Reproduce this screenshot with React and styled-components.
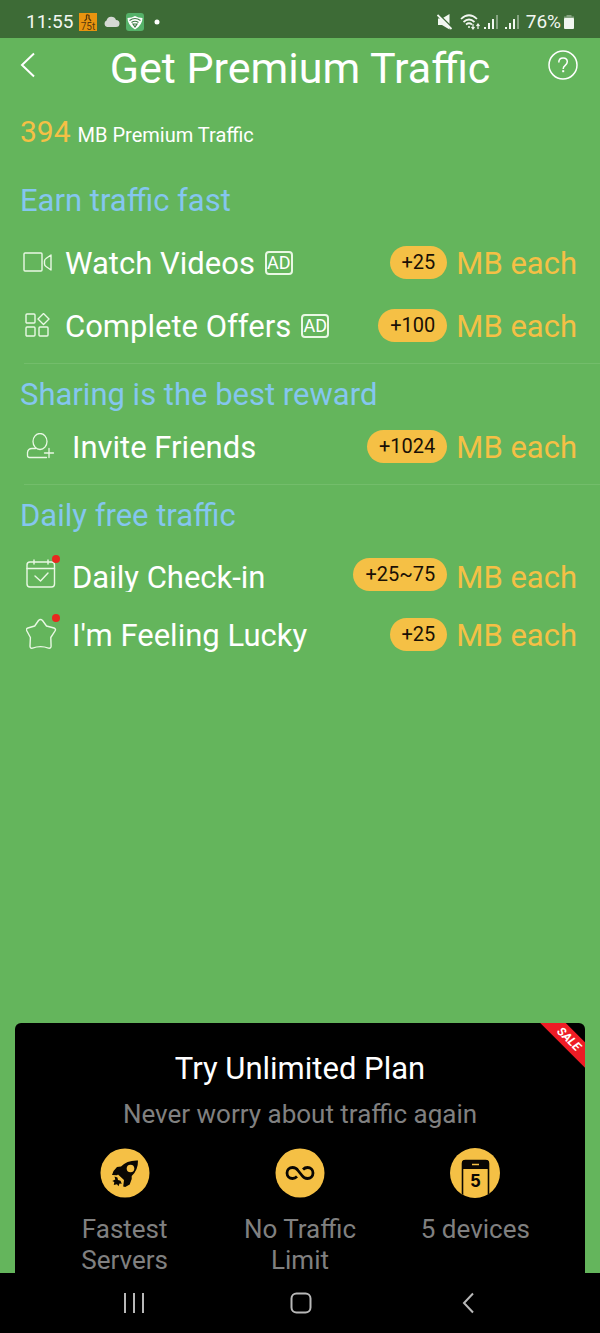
import React from "react";
import styled, { createGlobalStyle } from "styled-components";

const green = "#64b55c";
const amber = "#f5c045";

const GlobalStyle = createGlobalStyle`
  *, *::before, *::after { box-sizing: border-box; }
  body { margin: 0; background: ${green}; font-family: Roboto, "Liberation Sans", sans-serif; }
  button { font: inherit; color: inherit; background: none; border: 0; padding: 0; cursor: pointer; }
  h1, h2, p, ul { margin: 0; padding: 0; font-weight: 400; }
  ul { list-style: none; }
  svg { display: block; flex: none; }
`;

const Page = styled.div`
  display: flex;
  flex-direction: column;
  min-height: 100vh;
  background: ${green};
  color: #fff;
`;

const StatusBar = styled.div`
  display: flex;
  justify-content: space-between;
  height: 38px;
  padding: 6px 26px 0;
  background: #3d6b36;
  color: #f2f7f1;
  font-size: 19px;
  line-height: 32px;
`;

const StatusGroup = styled.div`
  display: flex;
  align-items: center;
  gap: ${(p) => p.$gap}px;
`;

const Header = styled.header`
  display: grid;
  grid-template-columns: 60px 1fr 60px;
  align-items: center;
  height: 56px;
`;

const IconButton = styled.button`
  display: flex;
  justify-content: ${(p) => p.$align};
  padding: 0 21px 2px 20px;
`;

const Title = styled.h1`
  padding-top: 4px;
  font-size: 43px;
  line-height: 52px;
  text-align: center;
  white-space: nowrap;
`;

const Balance = styled.p`
  margin: 20px 20px 0;
  font-size: 20px;
  line-height: 36px;
`;

const Amount = styled.span`
  margin-right: 7px;
  color: ${amber};
  font-size: 30px;
`;

const Section = styled.section`
  padding-top: ${(p) => p.$top}px;
`;

const SectionTitle = styled.h2`
  margin-bottom: ${(p) => p.$gap}px;
  padding: 0 20px;
  color: #85c6ef;
  font-size: 31px;
  line-height: 36px;
`;

const Divider = styled.hr`
  width: calc(100% - 24px);
  height: 1px;
  margin: 6px 0 0 24px;
  border: 0;
  background: #73bd6b;
`;

const Row = styled.button`
  display: flex;
  align-items: center;
  width: 100%;
  height: ${(p) => p.$height}px;
  padding: 0 23px;
  text-align: left;
`;

const RowIcon = styled.span`
  position: relative;
  flex: none;
  width: ${(p) => (p.$wide ? 49 : 42)}px;
  padding-left: ${(p) => (p.$wide ? 3 : 0)}px;
`;

const Dot = styled.span`
  position: absolute;
  top: -4px;
  left: 29px;
  width: 8px;
  height: 8px;
  border-radius: 50%;
  background: #e8281e;
`;

const RowLabel = styled.span`
  padding-top: ${(p) => (p.$clipped ? 8 : 3)}px;
  overflow: ${(p) => (p.$clipped ? "hidden" : "visible")};
  font-size: 31px;
  line-height: ${(p) => (p.$clipped ? 28 : 36)}px;
  white-space: nowrap;
`;

const AdBadge = styled.span`
  display: flex;
  flex: none;
  justify-content: center;
  width: 28px;
  margin-left: 10px;
  border: 2px solid #e9f8e4;
  border-radius: 4px;
  font-size: 18px;
  line-height: 20px;
`;

const Pill = styled.span`
  margin: 0 9px 0 auto;
  padding: 0 12px;
  border-radius: 17px;
  background: ${amber};
  color: #1a1005;
  font-size: 20px;
  line-height: 33px;
`;

const Unit = styled.span`
  padding-top: ${(p) => (p.$low ? 8 : 3)}px;
  color: ${amber};
  font-size: 31px;
  line-height: ${(p) => (p.$low ? 28 : 36)}px;
  white-space: nowrap;
`;

const PlanCard = styled.section`
  position: relative;
  margin: auto 15px -3px;
  padding: 28px 22px 0;
  border-radius: 6px 6px 0 0;
  background: #000;
  text-align: center;
  overflow: hidden;
`;

const PlanTitle = styled.h2`
  font-size: 31px;
  line-height: 36px;
`;

const PlanText = styled.p`
  margin: 12px 0 19px;
  color: #808080;
  font-size: 26px;
  line-height: 30px;
`;

const Features = styled.ul`
  display: grid;
  grid-template-columns: repeat(3, 1fr);
`;

const Feature = styled.li`
  display: flex;
  flex-direction: column;
  align-items: center;
  gap: 16px;
  color: #808080;
  font-size: 26px;
  line-height: 31px;
`;

const FeatureName = styled.span`
  max-width: 130px;
`;

const Ribbon = styled.span`
  position: absolute;
  top: 7px;
  right: -24px;
  width: 80px;
  background: #ee1c25;
  font-size: 12px;
  font-weight: 700;
  font-style: italic;
  line-height: 18px;
  transform: rotate(45deg);
`;

const NavBar = styled.nav`
  position: relative;
  display: grid;
  grid-template-columns: repeat(3, 1fr);
  height: 60px;
  padding: 0 48px 0 50px;
  background: #000;
`;

const NavButton = styled.button`
  display: flex;
  align-items: center;
  justify-content: center;
`;

const line = { fill: "none", stroke: "#e9f8e4", strokeWidth: 1.4, strokeLinejoin: "round", strokeLinecap: "round" };

const VideoIcon = () => (
  <svg width="30" height="22" viewBox="0 0 30 22" {...line}>
    <rect x="1" y="1" width="18" height="18" rx="1" />
    <path d="M28 3v15l-5-3.500q-1.500-1-1.500-2.500v-3q0-1.500 1.500-2.500z" />
  </svg>
);

const OffersIcon = () => (
  <svg width="30" height="26" viewBox="0 0 30 26" {...line}>
    <rect x="3" y="1" width="9" height="9" rx="1" />
    <rect x="3" y="14" width="9" height="9" rx="1" />
    <rect x="16" y="14" width="9" height="9" rx="1" />
    <path d="M20.500 0.500l5.500 5.500-5.500 5.500-5.500-5.500z" />
  </svg>
);

const InviteIcon = () => (
  <svg width="30" height="28" viewBox="0 0 30 28" {...line} strokeWidth="1.3">
    <ellipse cx="14" cy="8.500" rx="7" ry="8" />
    <path d="M9.500 15.500H6q-4 0-4.500 4v3q0 2 2 2h17M23 15.500v9M18.500 20h9" />
  </svg>
);

const CalendarIcon = () => (
  <svg width="30" height="30" viewBox="0 0 30 30" {...line}>
    <rect x="1" y="3" width="27.500" height="25" rx="3" />
    <path d="M1 9.500h27.500M8 1v4M22 1v4M9 17l5.500 5 7.500-8" />
  </svg>
);

const StarIcon = () => (
  <svg width="32" height="32" viewBox="0 0 32 32" {...line}>
    <path d="M12.500 2.500q2-2 4 0l4 5.500 7.500 2q2.300.9 1 3l-4.200 6.500.3 8.800q-.2 2.400-2.600 1.800-8-3-16 0-2.400.6-2.500-1.800l.4-8.800L0.900 13q-1.300-2.100 1-3l6.800-2z" />
  </svg>
);

const RocketIcon = () => (
  <svg width="50" height="50" viewBox="0 0 50 50">
    <circle cx="25" cy="25" r="24.500" fill={amber} />
    <path d="M38 12.500q-11-.5-17 6l-4 .5q-4 3.500-5 8l5 .2 1-.7 6 5.500-.8 6.500 2 .5 4.500-2.500 2-5.500v-3q6.500-6 6.300-15.500z" fill="#0a0703" />
    <circle cx="30.500" cy="20.500" r="3.800" fill={amber} />
    <path d="M14.500 28.500l.8 3-3 1.500 2 1-.5 3 3.200-.8 1.500 2 1-2.700 2.300.3-1.300-3-2.500-.8-.6-2.500z" fill="#0a0703" />
  </svg>
);

const InfinityIcon = () => (
  <svg width="50" height="50" viewBox="0 0 50 50">
    <circle cx="25" cy="25" r="24.500" fill={amber} />
    <path d="M29 21.500q2-2 4.500-2a5.500 5.500 0 0 1 0 11q-3.500 0-5.500-3l-4-5q-2-3-5.500-3a5.500 5.500 0 0 0 0 11q2.500 0 4.500-2" transform="translate(-1 0)" fill="none" stroke="#0a0703" strokeWidth="2.800" />
  </svg>
);

const DevicesIcon = () => (
  <svg width="50" height="50" viewBox="0 0 50 50">
    <clipPath id="disc"><circle cx="25" cy="25" r="25" /></clipPath>
    <circle cx="25" cy="25" r="25" fill={amber} />
    <g clipPath="url(#disc)">
      <path d="M12.500 50V15.500q0-3 3-3h20q3 0 3 3V50" fill="none" stroke="#0a0703" strokeWidth="1.600" />
      <path d="M12 21v-6q0-3 3-3h21q3 0 3 3v6z" fill="#0a0703" />
      <path d="M22 16.500h7" stroke={amber} strokeWidth="1.600" />
    </g>
    <text x="25.500" y="39" textAnchor="middle" fontFamily="Liberation Sans, sans-serif" fontWeight="700" fontSize="18" fill="#0a0703">5</text>
  </svg>
);

const SignalIcon = () => (
  <svg width="14" height="16" viewBox="0 0 14 16" fill="#f2f7f1">
    <path d="M0 13h2v2H0zM4 9h2v6H4zM8 5h2v10H8z" />
    <path d="M12 1h2v14h-2z" opacity=".4" />
  </svg>
);

const StatusIcons = () => (
  <>
    <svg width="18" height="18" viewBox="0 0 18 18">
      <rect width="18" height="18" fill="#e8940f" />
      <path d="M7.500 1.500l2.500 1v3l2 2.500M7.500 2v4l-2 2" fill="none" stroke="#5a3a0c" strokeWidth="1.300" />
      <text x="9" y="17" textAnchor="middle" fontFamily="Roboto, sans-serif" fontSize="10" fill="#5a3a0c">75t</text>
    </svg>
    <svg width="17" height="18" viewBox="0 0 17 18">
      <path d="M4 14a3.500 3.500 0 0 1-.5-6.500 5 5 0 0 1 9.500-.5 3.500 3.500 0 0 1 0 7z" fill="#d5d8d4" />
    </svg>
    <svg width="18" height="18" viewBox="0 0 18 18">
      <rect width="18" height="18" rx="3" fill="#55b169" />
      <path d="M1.500 5q4.500 0 7.500-2 3 2 7.500 2 0 7-7.500 11.500-7.500-4.500-7.500-11.500z" fill="#fff" />
      <path d="M3.500 7.500q5.500-4 11 0M5.500 9.500q3.500-2.500 7 0M9 14l-2-3h4z" fill="none" stroke="#3d7a45" strokeWidth="1.200" />
    </svg>
    <svg width="12" height="18" viewBox="0 0 12 18">
      <circle cx="7" cy="9" r="2.500" fill="#fff" />
    </svg>
  </>
);

const MuteIcon = () => (
  <svg width="16" height="16" viewBox="0 0 16 16" fill="#f2f7f1">
    <path d="M1 4.500h4L12.500 0v15.500L5 11H1z" />
    <path d="M1.500 0l14 14" stroke="#3d6b36" strokeWidth="1.600" />
    <path d="M.5 1l14 14" stroke="#f2f7f1" strokeWidth="1.800" />
  </svg>
);

const WifiIcon = () => (
  <svg width="20" height="16" viewBox="0 0 20 16" fill="none" stroke="#f2f7f1" strokeWidth="1.700">
    <path d="M1 5q8-7.500 16 0M3.500 8q5.500-5 11 0M6 10.500q3-2.500 6 0" />
    <circle cx="9" cy="13" r="1" fill="#f2f7f1" stroke="none" />
    <path d="M13 10v5M11.500 13l1.500 2 1.500-2M18 15v-5M16.500 12l1.500-2 1.500 2" strokeWidth="1.200" />
  </svg>
);

const BatteryIcon = () => (
  <svg width="10" height="16" viewBox="0 0 10 16">
    <path d="M2.500 1h5v1.500H10V5H0V2.500h2.500z" fill="#f2f7f1" opacity=".4" />
    <rect y="4" width="10" height="11" rx="1" fill="#f2f7f1" />
  </svg>
);

function Reward({ icon, wide, dot, label, ad, amount, height, clipped }) {
  return (
    <li>
      <Row type="button" $height={height}>
        <RowIcon $wide={wide}>
          {icon}
          {dot && <Dot />}
        </RowIcon>
        <RowLabel $clipped={clipped}>{label}</RowLabel>
        {ad && <AdBadge>AD</AdBadge>}
        <Pill>{amount}</Pill>
        <Unit $low={clipped}>MB each</Unit>
      </Row>
    </li>
  );
}

export default function App() {
  return (
    <Page>
      <GlobalStyle />
      <StatusBar>
        <StatusGroup $gap={6}>
          <span>11:55</span>
          <StatusIcons />
        </StatusGroup>
        <StatusGroup $gap={7}>
          <MuteIcon />
          <StatusGroup $gap={4}>
            <WifiIcon />
            <SignalIcon />
          </StatusGroup>
          <SignalIcon />
          <StatusGroup $gap={3}>
            <span>76%</span>
            <BatteryIcon />
          </StatusGroup>
        </StatusGroup>
      </StatusBar>

      <Header>
        <IconButton type="button" aria-label="Back" $align="flex-start">
          <svg width="16" height="26" viewBox="0 0 16 26" fill="none" stroke="#fff" strokeWidth="2">
            <path d="M14 1.500L2 13l12 11.500" />
          </svg>
        </IconButton>
        <Title>Get Premium Traffic</Title>
        <IconButton type="button" aria-label="Help" $align="flex-end">
          <svg width="32" height="32" viewBox="0 0 32 32" fill="none" stroke="#fff" strokeWidth="1.500">
            <circle cx="16" cy="16" r="14" />
            <path d="M11.800 13.500q0-4.500 4.300-4.500 4.200 0 4.200 3.800 0 2-2.300 3.800-1.800 1.500-1.800 3.400" />
            <path d="M15.200 22.200h2" strokeWidth="2" />
          </svg>
        </IconButton>
      </Header>

      <main>
        <Balance>
          <Amount>394</Amount>MB Premium Traffic
        </Balance>

        <Section $top={30}>
          <SectionTitle $gap={12}>Earn traffic fast</SectionTitle>
          <ul>
            <Reward height={63} icon={<VideoIcon />} label="Watch Videos" ad amount="+25" />
            <Reward height={63} icon={<OffersIcon />} label="Complete Offers" ad amount="+100" />
          </ul>
          <Divider />
        </Section>

        <Section $top={13}>
          <SectionTitle $gap={2}>Sharing is the best reward</SectionTitle>
          <ul>
            <Reward height={63} wide icon={<InviteIcon />} label="Invite Friends" amount="+1024" />
          </ul>
          <Divider />
        </Section>

        <Section $top={13}>
          <SectionTitle $gap={10}>Daily free traffic</SectionTitle>
          <ul>
            <Reward height={60} wide dot clipped icon={<CalendarIcon />} label="Daily Check-in" amount="+25~75" />
            <Reward height={60} wide dot icon={<StarIcon />} label="I'm Feeling Lucky" amount="+25" />
          </ul>
        </Section>
      </main>

      <PlanCard>
        <Ribbon>SALE</Ribbon>
        <PlanTitle>Try Unlimited Plan</PlanTitle>
        <PlanText>Never worry about traffic again</PlanText>
        <Features>
          <Feature>
            <RocketIcon />
            <FeatureName>Fastest Servers</FeatureName>
          </Feature>
          <Feature>
            <InfinityIcon />
            <FeatureName>No Traffic Limit</FeatureName>
          </Feature>
          <Feature>
            <DevicesIcon />
            <FeatureName>5 devices</FeatureName>
          </Feature>
        </Features>
      </PlanCard>

      <NavBar>
        <NavButton type="button" aria-label="Recent apps">
          <svg width="22" height="22" viewBox="0 0 22 22" stroke="#b8b8b8" strokeWidth="2">
            <path d="M2 1v20M11 1v20M20 1v20" />
          </svg>
        </NavButton>
        <NavButton type="button" aria-label="Home">
          <svg width="22" height="22" viewBox="0 0 22 22" fill="none" stroke="#b8b8b8" strokeWidth="2">
            <rect x="1.500" y="1.500" width="19" height="19" rx="5" />
          </svg>
        </NavButton>
        <NavButton type="button" aria-label="Back">
          <svg width="12" height="22" viewBox="0 0 12 22" fill="none" stroke="#b8b8b8" strokeWidth="2">
            <path d="M11 1.500L2 11l9 9.500" />
          </svg>
        </NavButton>
      </NavBar>
    </Page>
  );
}
